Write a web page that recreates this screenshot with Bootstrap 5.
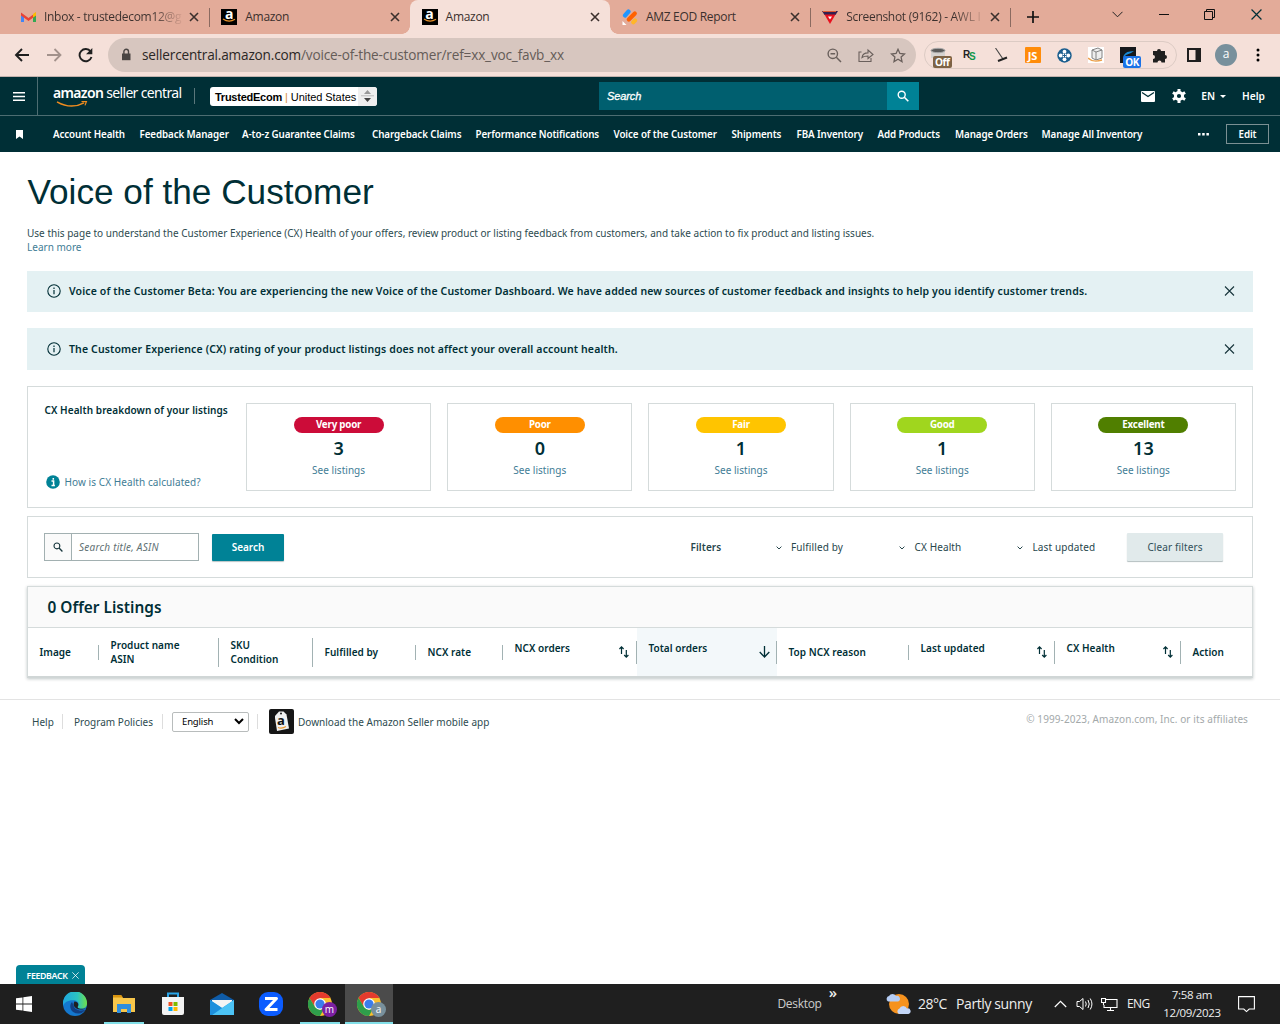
<!DOCTYPE html>
<html lang="en">
<head>
<meta charset="utf-8">
<meta name="viewport" content="width=device-width, initial-scale=1">
<title>Amazon</title>
<link href="https://cdn.jsdelivr.net/npm/bootstrap@5.3.0/dist/css/bootstrap.min.css" rel="stylesheet">
<style>
:root{--ink:#002f36;--teal:#008296;--line:#d5dbdb;--link:#3f7d96}
body{height:1024px;width:1280px;overflow:hidden;font-family:"Noto Sans","Open Sans",sans-serif;font-size:10px;line-height:14px;color:var(--ink);background:#fff;white-space:nowrap}
svg{display:block;flex:none}
a{text-decoration:none;color:var(--link)}
/* small left gaps between icons and labels */
.gl-4{margin-left:4px}.gl-5{margin-left:5px}.gl-7{margin-left:7px}.gl-8{margin-left:8px}.gl-9{margin-left:9px}.gl-10{margin-left:10px}.gl-11{margin-left:11px}.gl-13{margin-left:13px}.gl-14{margin-left:14px}.gl-15{margin-left:15px}.gl-16{margin-left:16px}.gl-17{margin-left:17px}.gl-19{margin-left:19px}.gl-30{margin-left:30px}
.gt-8{margin-top:8px}.gt-16{margin-top:16px}
.chrome-ui{font-family:"Open Sans","Noto Sans",sans-serif}
/* tab strip */
.tabstrip{height:34px;background:#e3ab99;padding-left:9.5px}
.tab-item{width:200.3px;height:34px;padding:0 10.500px 0 11.5px;position:relative;font-size:12px;letter-spacing:-.3px;color:#3b302d}
.tab-item .tab-title{flex:1;margin-left:8px}
.tab-item.fade-end .tab-title{background:linear-gradient(90deg,#3b302d 108px,#cf9a89 136px);-webkit-background-clip:text;background-clip:text;color:transparent}
.tab-item.split::after{content:"";position:absolute;right:0;top:8px;width:1px;height:19px;background:#8b6a60}
.tab-item.current{background:#f5e0d9;border-radius:8px 8px 0 0}
.tab-item.current::before,.tab-item.current::after{content:"";position:absolute;bottom:0;width:8px;height:8px}
.tab-item.current::before{left:-8px;background:radial-gradient(circle at 0 0,transparent 7.5px,#f5e0d9 8px)}
.tab-item.current::after{right:-8px;background:radial-gradient(circle at 100% 0,transparent 7.5px,#f5e0d9 8px)}
.a-fav{width:16px;height:16px;background:#000;flex:none;color:#fff;font-weight:700;font-size:14px;line-height:10px;letter-spacing:0;text-align:center}
.a-fav svg{margin:-1px 0 0 1px}
.win-btns{height:28px;width:150px;margin-right:18px}
/* toolbar */
.toolbar{height:43px;background:#f5e0d9;border-bottom:1px solid #c2b2ad;padding:0 14px}
.omnibox{width:808px;height:34px;border-radius:17px;background:#d7c6bf;padding:0 10px 0 12px;font-size:13.6px;letter-spacing:-.17px;color:#2b2725}
.omnibox .url-path{color:#655c58}
.page-acts{color:#6a605c}
.ext-pill{width:253px;height:28px;border:1px solid #dccbc4;border-radius:14px}
.ext-pill>*{width:32px;height:26px;display:flex;align-items:center;justify-content:center;position:relative}
.ext-pill>:first-child{width:28px}
.ext-pill>:last-child{width:32px}
.ext-tag{position:absolute;left:8px;top:14px;height:12px;border-radius:2px;font-size:10px;letter-spacing:-.4px;font-weight:700;line-height:12px;color:#fff;padding:0 2px}
.tag-off{background:#7d6245}.tag-ok{background:#1a73e8;left:11px}
.js-box{width:16px;height:16px;background:#ff8c0a;border-radius:1px;color:#fff;font:700 11px/17px "Noto Sans",sans-serif;text-align:center}
.rs-mark{font:700 10px/14px "Liberation Sans",sans-serif;letter-spacing:-1px;color:#222}
.rs-mark span{color:#11984b;position:relative;top:2px}
.avatar{width:22px;height:22px;border-radius:50%;background:#78909c;color:#fff;font-size:12px;line-height:20px;text-align:center}
/* seller central header */
.sc-top{height:39px;background:var(--ink);border-bottom:1px solid #4d6d72;color:#fff}
.sc-burger{width:38px;height:38px;border-right:1px solid #4d6d72}
.sc-logo{width:128px;margin-left:15px;font-size:14px;line-height:18px;letter-spacing:-.66px;height:24px;position:relative}
.sc-logo b{font-weight:600;letter-spacing:-.66px}
.sc-logo svg{position:absolute;left:3px;top:17px}
.sc-rule{width:1px;height:16px;background:#5a777b;margin:0 15px 0 13px}
.acct{width:167px;height:19px;background:#fff;border-radius:3px;color:#000;font:11px/20px "Liberation Sans",sans-serif;padding-left:5px;letter-spacing:-.05px}
.acct b{font-weight:700;letter-spacing:-.25px}
.acct i{font-style:normal;color:#d98a3d}
.acct-step{width:19px;height:19px;background:#efefef;border-radius:0 3px 3px 0}
.sc-search{width:320px;height:28px;margin-left:222px;background:#005f6f}
.sc-search em{font:italic 11px/28px "Liberation Sans",sans-serif;letter-spacing:-.1px;padding-left:8px;-webkit-text-stroke:.3px #fff}
.sc-search .go{width:32px;height:28px;background:var(--teal)}
.sc-right{margin-left:auto;padding-right:15px;font-weight:600;font-size:10.2px}
.sc-nav{height:36px;background:var(--ink);color:#fff;font-weight:600;font-size:9.8px;letter-spacing:-.1px}
.sc-links{display:grid;grid-template-columns:86.5px 102.5px 130px 103.5px 138px 118px 65px 81px 77.5px 86.5px 102px;padding-top:2px}
.btn-edit{width:43px;height:20px;border:1px solid #7b9093;line-height:19px;text-align:center;margin:0 11px 0 17px}
/* content */
.page-main{padding:0 27px}
h1{font:35.2px/42px "Liberation Sans",sans-serif;margin:19px 0 0 .5px;color:var(--ink)}
.intro{margin-top:13px;color:#2d4b50;height:28px;letter-spacing:.012px}
.notice{height:41px;background:#e4f1f3;padding:0 18px 1px 20px;margin-top:16px;font-weight:600;font-size:10.5px;letter-spacing:.138px}
.notice.n-first{margin-top:17px}
.notice.n-tall{height:42px}
.notice svg:last-child{color:#17363c}
.panel{border:1px solid var(--line)}
.panel-cx{height:122px;margin-top:16px}
.panel-find{height:62px;padding:0 29px 0 16px}
.hb{font-weight:600;letter-spacing:.08px}
.cx-side{width:202px;padding-left:.5px}
.cx-side a{letter-spacing:.08px;margin-bottom:2px}
.cx-card{flex:1;height:88px;border:1px solid var(--line);padding-top:13px;text-align:center}
.cx-pill{width:90px;height:16px;border-radius:8px;color:#fff;font-weight:700;font-size:9.8px;line-height:15px;margin:0 auto;letter-spacing:-.22px}
.p-vpoor{background:#cc0c39}.p-poor{background:#ff8f00}.p-fair{background:#ffc400}.p-good{background:#a0d61e}.p-exc{background:#507f00}
.cx-num{font-weight:600;font-size:18px;line-height:31px}
.cx-card a{display:block;line-height:12px;letter-spacing:.04px}
.find-box{width:155px;height:28px;border:1px solid #a2b0b1;font-style:italic;color:#5f7173;letter-spacing:.25px}
.find-box .ico{width:27px;background:#fafafa;border-right:1px solid #a2b0b1;color:#17363c}
.find-box span{padding:6px 0 0 7px}
.b-primary{width:72px;height:27px;background:var(--teal);color:#fff;font-weight:600;line-height:27px;text-align:center;border-radius:1px;box-shadow:0 1px 1px #b9c4c5}
.b-clear{width:96px;height:28px;background:#e1eaeb;color:#31505a;line-height:28px;text-align:center;border-radius:1px;box-shadow:0 1px 1px #b4bfc0;letter-spacing:.12px}
.filter-row{display:grid;grid-template-columns:85px 123.5px 118px 110px 96px;color:#27464c;letter-spacing:.12px}
.filter-row svg{display:inline-block;vertical-align:middle;margin-right:9.5px}
.listing{border:1px solid var(--line);border-bottom:2px solid #d0d6d6;box-shadow:0 1px 3px rgba(0,30,30,.25);height:92px}
.listing-head{height:41px;background:#fafafa;border-bottom:1px solid var(--line);font-weight:600;font-size:15.4px;line-height:41px;padding-left:19.5px}
.cols{display:grid;grid-template-columns:71px 120px 94px 103px 87px 134px 140px 132px 146px 126px 71px;height:48px;font-weight:600;letter-spacing:.05px}
.cols>div{display:flex;align-items:center;padding-left:11.5px;position:relative}
.cols>div:not(:last-child)::after{content:"";position:absolute;right:0;top:17px;height:15px;width:1px;background:#a2b2b3}
.cols>.two::after{top:10px!important;height:29px!important}
.cols>.sort::after{top:13px!important;height:23px!important}
.cols>.sort{justify-content:space-between;padding-right:8px}
.cols>.sort.sorted{padding-right:7px;background:#f3f8fa}
.cols>.sort svg{margin-top:-1px}
.cols>.sort span{margin-top:-8px}
footer{height:45px;border-top:1px solid #e3e3e3;margin-top:21px;padding:0 32px 1px;color:#2d4b50;letter-spacing:.02px}
.f-rule{width:1px;height:15px;background:#ddd}
.f-help{width:30px}
.f-pol{width:88px}
.f-copy{color:#a3a9aa;margin-top:-6px;letter-spacing:.09px}
.lang{width:77px;height:20px;border:1px solid #b8bcbc;border-radius:2px;color:#000;padding:0 4px 0 9px;margin:0 8px 0 9px;font-size:9.5px;letter-spacing:-.15px}
.app-ico{width:25px;height:25px;border-radius:2px;background:#161616;position:relative}
.app-ico svg{position:absolute;left:0;top:0}
.app-ico span{position:absolute;left:8px;top:4px;font:700 13px/15px "Open Sans",sans-serif;color:#111}
.feedback{width:69px;height:19px;background:var(--teal);border-radius:4px 4px 0 0;color:#fff;font-weight:600;font-size:8.8px;letter-spacing:-.35px;margin:auto 0 0 16px;padding:2px 6px 0 10.5px}
/* taskbar */
.taskbar{height:40px;background:#1f1f1f;color:#eee;font-size:12px;line-height:18px}
.tk{width:48px;height:40px;position:relative;margin-left:1px}
.tk.start{width:50px;margin:0;padding-right:2px}
.tk.run::after{content:"";position:absolute;left:4px;right:4px;bottom:0;height:2px;background:#82dfe8}
.tk.front{background:#4b4b4b}
.tk.front::after{left:0;right:0}
.prof{position:absolute;left:26px;top:18px;width:15px;height:15px;border-radius:50%;color:#fff;font-size:10px;line-height:14px;text-align:center}
.prof.pm{background:#7b1fa2}.prof.pa{background:#78909c}
.tb-desk{color:#ccc;letter-spacing:-.3px}
.tb-more{margin:-3px 0 0 7px;font-size:15px;font-weight:600}
.wx{margin-left:49px}
.wx-t{font-size:14px;width:38px;letter-spacing:-.5px}
.wx-s{font-size:14px;width:98px;letter-spacing:-.4px}
.tb-lang{width:36px;letter-spacing:-.6px}
.tb-clock{width:58px;font-size:11.5px;letter-spacing:-.35px}
.tb-note{margin:1px 25px 0 17px}
</style>
</head>
<body class="d-flex flex-column">
<svg width="0" height="0" class="position-absolute">
 <symbol id="x" viewBox="0 0 10 10"><path d="M1 1l8 8M9 1L1 9" fill="none" stroke="currentColor" stroke-width="1.6"/></symbol>
 <symbol id="x1" viewBox="0 0 10 10"><path d="M.5.5l9 9M9.500.5l-9 9" fill="none" stroke="currentColor" stroke-width="1.1"/></symbol>
 <symbol id="mag" viewBox="0 0 12 12"><circle cx="4.700" cy="4.700" r="3.500" fill="none" stroke="currentColor" stroke-width="1.400"/><path d="M7.300 7.300l4 4" stroke="currentColor" stroke-width="1.600"/></symbol>
 <symbol id="smile" viewBox="0 0 14 5"><path d="M1 1q6 4 12 .2" fill="none" stroke="#e8912a" stroke-width="1.300"/></symbol>
 <symbol id="info" viewBox="0 0 14 14"><circle cx="7" cy="7" r="6.200" fill="none" stroke="currentColor" stroke-width="1.100"/><path d="M7 6v4.200M7 3.600v1.300" stroke="currentColor" stroke-width="1.200"/></symbol>
 <symbol id="updn" viewBox="0 0 10 14"><path d="M2.500 9V2M.4 4l2.100-2.200L4.600 4M7.300 5v7M5.200 10l2.100 2.200L9.400 10" fill="none" stroke="currentColor" stroke-width="1.200"/></symbol>
 <symbol id="chev" viewBox="0 0 6 4"><path d="M.6.6L3 3 5.400.6" fill="none" stroke="currentColor"/></symbol>
 <symbol id="chr" viewBox="0 0 24 24"><circle cx="12" cy="12" r="12" fill="#fbc02d"/><path d="M1.600 6A12 12 0 0 1 22.400 6H12L7 15z" fill="#e33b2e"/><path d="M1.600 6A12 12 0 0 0 12 24l5-9-5 3-5-3z" fill="#2e9e4b"/><circle cx="12" cy="12" r="5.800" fill="#fff"/><circle cx="12" cy="12" r="4.600" fill="#3b7ded"/></symbol>
</svg>

<div class="chrome-ui">
 <div class="tabstrip d-flex">
  <div class="tab-item d-flex align-items-center split fade-end"><svg width="15" height="12" viewBox="0 0 15 12"><path d="M0 2v9h3V5z" fill="#4285f4"/><path d="M15 2v9h-3V5z" fill="#34a853"/><path d="M0 1.500l7.500 5.500L15 1.500V4.500l-7.500 5.500L0 4.500z" fill="#ea4335"/><path d="M12 3l3-2v3.500l-3 2z" fill="#fbbc04"/></svg><span class="tab-title">Inbox - trustedecom12@g</span><svg width="10" height="10"><use href="#x"/></svg></div>
  <div class="tab-item d-flex align-items-center"><div class="a-fav">a<svg width="14" height="5"><use href="#smile"/></svg></div><span class="tab-title">Amazon</span><svg width="10" height="10"><use href="#x"/></svg></div>
  <div class="tab-item current d-flex align-items-center"><div class="a-fav">a<svg width="14" height="5"><use href="#smile"/></svg></div><span class="tab-title">Amazon</span><svg width="10" height="10"><use href="#x"/></svg></div>
  <div class="tab-item d-flex align-items-center split"><svg width="16" height="16" viewBox="0 0 16 16"><g stroke-width="4.200" stroke-linecap="round"><path d="M3 6.500l3.500-4" stroke="#2196ff"/><path d="M6.800 10.500l6-6" stroke="#ff6100"/><path d="M11.300 13.300l1.700-1.700" stroke="#ffb629"/></g><path d="M.5 12v4h4z" fill="#fff"/></svg><span class="tab-title">AMZ EOD Report</span><svg width="10" height="10"><use href="#x"/></svg></div>
  <div class="tab-item d-flex align-items-center split fade-end"><svg width="16" height="14" viewBox="0 0 16 14"><path d="M0 1h16l-2.500 4h-11z" fill="#342050"/><path d="M2.500 4.500h11L8 14z" fill="#e8101e"/><path d="M6 6.500h4L8 9.500z" fill="#fff"/><path d="M1 1.500h13" stroke="#e05a35"/></svg><span class="tab-title">Screenshot (9162) - AWL I</span><svg width="10" height="10"><use href="#x"/></svg></div>
  <svg class="gl-16 align-self-center" width="12" height="12" viewBox="0 0 12 12"><path d="M6 0v12M0 6h12" stroke="#111" stroke-width="1.700"/></svg>
  <div class="win-btns ms-auto d-flex justify-content-between align-items-center">
   <svg width="11" height="7" viewBox="0 0 11 7"><path d="M.5.8l5 5 5-5" fill="none" stroke="#222"/></svg>
   <svg width="10" height="2"><path d="M0 1.500h10" stroke="#111"/></svg>
   <svg width="11" height="11" viewBox="0 0 11 11"><path d="M.5 2.500h8v8h-8zM2.500 2.500v-2h8v8h-2" fill="none" stroke="#111"/></svg>
   <svg width="11" height="11"><use href="#x1"/></svg>
  </div>
 </div>
 <div class="toolbar d-flex align-items-center">
  <svg width="16" height="14" viewBox="0 0 16 14"><path d="M15 7H2M8 1L2 7l6 6" fill="none" stroke="#1f1f1f" stroke-width="1.900"/></svg>
  <svg class="gl-17" width="16" height="14" viewBox="0 0 16 14"><path d="M0 7h13M7.500 1l6 6-6 6" fill="none" stroke="#a3928c" stroke-width="1.800"/></svg>
  <svg class="gl-15" width="15" height="15" viewBox="0 0 15 15"><path d="M12.600 3.500A6.100 6.100 0 1 0 13.500 9" fill="none" stroke="#1f1f1f" stroke-width="1.900"/><path d="M14.300 0v6.300H8z" fill="#1f1f1f"/></svg>
  <div class="omnibox gl-15 d-flex align-items-center">
   <svg width="12" height="14" viewBox="0 0 12 14"><path d="M2 5.500h8.500v6.700H2z" fill="#4a4543"/><path d="M3.900 6V3.500a2.300 2.300 0 0 1 4.600 0V6" fill="none" stroke="#4a4543" stroke-width="1.400"/></svg>
   <span class="gl-10">sellercentral.amazon.com<span class="url-path">/voice-of-the-customer/ref=xx_voc_favb_xx</span></span>
   <div class="page-acts ms-auto d-flex align-items-center gap-3">
    <svg width="15" height="15" viewBox="0 0 15 15"><circle cx="5.800" cy="5.800" r="4.700" fill="none" stroke="currentColor" stroke-width="1.400"/><path d="M9.300 9.300l4.700 4.700M3.500 5.800h4.600" stroke="currentColor" stroke-width="1.500"/></svg>
    <svg width="16" height="15" viewBox="0 0 16 15"><path d="M3.500 4H1v9.500h12V10M4 9.500c.5-3 2.500-4.600 6-4.600V2l5 4.500-5 4V8c-2.500 0-4.500.3-6 1.500z" fill="none" stroke="currentColor" stroke-width="1.100"/></svg>
    <svg width="16" height="15" viewBox="0 0 16 15"><path d="M8 1.300l1.900 4.200 4.600.5-3.400 3.100.9 4.500L8 11.300l-4 2.300.9-4.500L1.500 6l4.600-.5z" fill="none" stroke="currentColor" stroke-width="1.300"/></svg>
   </div>
  </div>
  <div class="ext-pill gl-8 d-flex">
   <div><svg width="17" height="16" viewBox="0 0 17 16"><path d="M1 3v8h14V3z" fill="#d5d2d0"/><ellipse cx="8" cy="3.500" rx="7" ry="2.200" fill="#5a5a5a" stroke="#aaa"/></svg><span class="ext-tag tag-off">Off</span></div>
   <div class="rs-mark">R<span>S</span></div>
   <div><svg width="14" height="14" viewBox="0 0 14 14"><path d="M1.500 0L9 11" stroke="#444" stroke-width="1.100"/><path d="M4 13l9-3.500" stroke="#222" stroke-width="1.900"/></svg></div>
   <div><div class="js-box">JS</div></div>
   <div><svg width="15" height="15" viewBox="0 0 15 15"><circle cx="7.500" cy="7.500" r="7.200" fill="#1c5f8f"/><g fill="#fff"><circle cx="7.500" cy="3.700" r="1.900"/><circle cx="7.500" cy="11.300" r="1.900"/><circle cx="3.700" cy="7.500" r="1.900"/><circle cx="11.300" cy="7.500" r="1.900"/><path d="M5.700 5.700h3.600v3.600H5.700z"/></g><path d="M7.500 5.500v4M5.500 7.500h4" stroke="#1c5f8f" stroke-width="1"/></svg></div>
   <div><svg width="16" height="16" viewBox="0 0 16 16"><path d="M0 0h16v16H0z" fill="#fff"/><path d="M4 3l6-2 4 2v8l-6 2-4-2zM4 3l4 2v8M8 5l6-2" fill="#eee" stroke="#777" stroke-width=".9"/><path d="M0 11q5 5 14 2" fill="none" stroke="#eda04a" stroke-width="1.400"/></svg></div>
   <div><svg width="16" height="16" viewBox="0 0 16 16"><path d="M0 0h16v16H0z" fill="#15181c"/><path d="M3 11q1-6 7-6.500l4-.5-3 2-5 2z" fill="#1689d6"/></svg><span class="ext-tag tag-ok">OK</span></div>
   <div><svg width="16" height="16" viewBox="0 0 16 16"><path d="M1 4h4a2 2 0 1 1 4 0h4v4a2 2 0 1 1 0 4v3.500H9.500a2 2 0 1 0-4 0H1V12a2 2 0 1 0 0-4z" fill="#1f1f1f"/></svg></div>
  </div>
  <svg class="gl-10" width="14" height="14" viewBox="0 0 14 14"><path d="M1 1h12v12H1z" fill="none" stroke="#1f1f1f" stroke-width="2"/><path d="M8.500 1H13v12H8.500z" fill="#1f1f1f"/></svg>
  <div class="avatar gl-14">a</div>
  <svg class="gl-19" width="4" height="14" viewBox="0 0 4 14"><circle cx="2" cy="2" r="1.500"/><circle cx="2" cy="7" r="1.500"/><circle cx="2" cy="12" r="1.500"/></svg>
 </div>
</div>

<header>
 <div class="sc-top d-flex align-items-center">
  <div class="sc-burger d-flex align-items-center justify-content-center"><svg width="12" height="9" viewBox="0 0 12 9"><path d="M0 .8h12M0 4.500h12M0 8.200h12" stroke="#fff" stroke-width="1.400"/></svg></div>
  <div class="sc-logo"><b>amazon</b> seller central<svg width="32" height="7" viewBox="0 0 32 7"><path d="M1 .8q14 8 27 1" fill="none" stroke="#f08c1f" stroke-width="1.500"/><path d="M25.500 .6l5-.2-1.500 4" fill="none" stroke="#f08c1f" stroke-width="1.200"/></svg></div>
  <div class="sc-rule"></div>
  <div class="acct d-flex"><span class="flex-grow-1"><b>TrustedEcom</b> <i>|</i> United States</span><div class="acct-step d-flex align-items-center justify-content-center"><svg width="13" height="12" viewBox="0 0 13 12"><path d="M3 4l3.500-4L10 4z" fill="#999"/><path d="M0 5.800h13" stroke="#bbb"/><path d="M3 8l3.500 4L10 8z" fill="#444"/></svg></div></div>
  <div class="sc-search d-flex"><em class="flex-grow-1">Search</em><div class="go d-flex align-items-center justify-content-center"><svg width="12" height="12"><use href="#mag"/></svg></div></div>
  <div class="sc-right d-flex align-items-center">
   <svg width="14" height="11" viewBox="0 0 14 11"><rect width="14" height="11" rx="1" fill="#fff"/><path d="M1 1.500l6 4 6-4" fill="none" stroke="#002f36" stroke-width="1.300"/></svg>
   <svg class="gl-17" width="14" height="14" viewBox="0 0 14 14"><circle cx="7" cy="7" r="3.600" fill="none" stroke="#fff" stroke-width="3"/><g stroke="#fff" stroke-width="3"><path d="M7 0v3M7 11v3M.9 3.500l2.600 1.500M10.500 9l2.600 1.500M.9 10.500L3.500 9M10.500 5l2.600-1.500"/></g></svg>
   <span class="gl-15">EN</span><svg class="gl-5" width="6" height="3"><path d="M0 0h6L3 3z" fill="#fff"/></svg>
   <span class="gl-16">Help</span>
  </div>
 </div>
 <nav class="sc-nav d-flex align-items-center">
  <svg class="gl-16" width="7" height="9"><path d="M0 0h7v9L3.500 6.500 0 9z" fill="#fff"/></svg>
  <div class="sc-links gl-30"><span>Account Health</span><span>Feedback Manager</span><span>A-to-z Guarantee Claims</span><span>Chargeback Claims</span><span>Performance Notifications</span><span>Voice of the Customer</span><span>Shipments</span><span>FBA Inventory</span><span>Add Products</span><span>Manage Orders</span><span>Manage All Inventory</span></div>
  <svg class="ms-auto" width="11" height="3"><path d="M0 0h2.500v2.500H0zM4.200 0h2.500v2.500H4.200zM8.400 0h2.500v2.500H8.400z" fill="#fff"/></svg>
  <div class="btn-edit">Edit</div>
 </nav>
</header>

<main class="page-main">
 <h1>Voice of the Customer</h1>
 <div class="intro">Use this page to understand the Customer Experience (CX) Health of your offers, review product or listing feedback from customers, and take action to fix product and listing issues.<br><a href="#">Learn more</a></div>
 <div class="notice n-first d-flex align-items-center"><svg width="14" height="14"><use href="#info"/></svg><span class="gl-8">Voice of the Customer Beta: You are experiencing the new Voice of the Customer Dashboard. We have added new sources of customer feedback and insights to help you identify customer trends.</span><svg class="ms-auto" width="11" height="10"><use href="#x1"/></svg></div>
 <div class="notice n-tall d-flex align-items-center"><svg width="14" height="14"><use href="#info"/></svg><span class="gl-8">The Customer Experience (CX) rating of your product listings does not affect your overall account health.</span><svg class="ms-auto" width="11" height="10"><use href="#x1"/></svg></div>

 <section class="panel panel-cx d-flex p-3">
  <div class="cx-side d-flex flex-column justify-content-between"><span class="hb">CX Health breakdown of your listings</span><a href="#" class="d-flex align-items-center"><svg class="ms-0" width="15" height="14" viewBox="-1 0 15 14"><circle cx="7" cy="7" r="6.800" fill="#008296"/><path d="M5.500 6H7.600v4.300M5.500 10.500h3.400M7.300 3v1.700" fill="none" stroke="#fff" stroke-width="1.500"/></svg><span class="gl-5">How is CX Health calculated?</span></a></div>
  <div class="d-flex flex-grow-1 gap-3">
   <div class="cx-card"><div class="cx-pill p-vpoor">Very poor</div><div class="cx-num">3</div><a href="#">See listings</a></div>
   <div class="cx-card"><div class="cx-pill p-poor">Poor</div><div class="cx-num">0</div><a href="#">See listings</a></div>
   <div class="cx-card"><div class="cx-pill p-fair">Fair</div><div class="cx-num">1</div><a href="#">See listings</a></div>
   <div class="cx-card"><div class="cx-pill p-good">Good</div><div class="cx-num">1</div><a href="#">See listings</a></div>
   <div class="cx-card"><div class="cx-pill p-exc">Excellent</div><div class="cx-num">13</div><a href="#">See listings</a></div>
  </div>
 </section>

 <section class="panel panel-find gt-8 d-flex align-items-center">
  <div class="find-box d-flex"><div class="ico d-flex align-items-center justify-content-center"><svg width="10" height="10" viewBox="0 0 12 12"><circle cx="4.700" cy="4.700" r="3.500" fill="none" stroke="currentColor" stroke-width="1.300"/><path d="M7.300 7.300l4 4" stroke="currentColor" stroke-width="1.600"/></svg></div><span>Search title, ASIN</span></div>
  <div class="b-primary gl-13">Search</div>
  <div class="filter-row ms-auto align-items-center"><span class="hb">Filters</span><span><svg width="6" height="4"><use href="#chev"/></svg>Fulfilled by</span><span><svg width="6" height="4"><use href="#chev"/></svg>CX Health</span><span><svg width="6" height="4"><use href="#chev"/></svg>Last updated</span><div class="b-clear">Clear filters</div></div>
 </section>

 <section class="listing gt-8">
  <div class="listing-head">0 Offer Listings</div>
  <div class="cols">
   <div>Image</div><div class="two">Product name<br>ASIN</div><div class="two">SKU<br>Condition</div><div>Fulfilled by</div><div>NCX rate</div>
   <div class="sort"><span>NCX orders</span><svg width="10" height="14"><use href="#updn"/></svg></div>
   <div class="sort sorted"><span>Total orders</span><svg width="11" height="12" viewBox="0 0 11 12"><path d="M5.500 0v11M.7 6l4.800 5 4.800-5" fill="none" stroke="currentColor" stroke-width="1.300"/></svg></div>
   <div>Top NCX reason</div>
   <div class="sort"><span>Last updated</span><svg width="10" height="14"><use href="#updn"/></svg></div>
   <div class="sort"><span>CX Health</span><svg width="10" height="14"><use href="#updn"/></svg></div>
   <div>Action</div>
  </div>
 </section>
</main>

<footer class="d-flex align-items-center">
 <span class="f-help">Help</span><i class="f-rule"></i>
 <span class="f-pol gl-11">Program Policies</span><i class="f-rule"></i>
 <div class="lang d-flex align-items-center justify-content-between">English<svg width="10" height="7" viewBox="0 0 10 7"><path d="M1 1l4 4 4-4" fill="none" stroke="#000" stroke-width="2"/></svg></div><i class="f-rule"></i>
 <div class="app-ico gl-11"><svg width="25" height="25" viewBox="0 0 25 25"><path d="M6 7l4-4.500h4.500l3 3 2.500 14-12 2.500-2-13z" fill="#f1f1f1"/><path d="M9 18.500q4 1.500 8-1" fill="none" stroke="#f29a2e" stroke-width="1.200"/><circle cx="12" cy="4.500" r="1" fill="#161616"/></svg><span>a</span></div>
 <span class="gl-4">Download the Amazon Seller mobile app</span>
 <span class="f-copy ms-auto">© 1999-2023, Amazon.com, Inc. or its affiliates</span>
</footer>

<div class="feedback d-flex align-items-center justify-content-between">FEEDBACK<svg width="7" height="7"><use href="#x1"/></svg></div>
<div class="taskbar chrome-ui d-flex align-items-center">
 <div class="tk start d-flex align-items-center justify-content-center"><svg width="16" height="16" viewBox="0 0 16 16"><path d="M0 2.300l6.500-.9v6.200H0zM7.300 1.200L16 0v7.600H7.300zM0 8.400h6.500v6.200L0 13.700zM7.300 8.400H16V16l-8.700-1.200z" fill="#fff"/></svg></div>
 <div class="tk d-flex align-items-center justify-content-center"><svg width="24" height="24" viewBox="0 0 24 24"><defs><linearGradient id="eg"><stop offset="0" stop-color="#1ea7e0"/><stop offset=".6" stop-color="#2cc3c0"/><stop offset="1" stop-color="#6fe04a"/></linearGradient></defs><circle cx="12" cy="12" r="12" fill="#1478cf"/><path d="M23 16.500Q24 19 22 22l3 2V15z" fill="#1f1f1f"/><path d="M0 11A12 12 0 0 1 24 11.500c0 4-3.500 5.500-6.500 5.200-2.500-.2-3.400-1.200-2.600-2.200 1.800-2.800 0-5.700-3.400-6.200C6 7.600 1 10 0 14z" fill="url(#eg)"/><path d="M9 10c-4 4-1 12 7 11.500 3 0 5-2 6.500-4C17 20 11 17.500 10.500 13z" fill="#123f83"/><path d="M11.500 9.500c-2 3-.5 7.500 6 8 2 .1 4-.4 5.500-1.500-3 1.500-8 .8-8.400-.8-.1-.6 1-1.500.6-3.200-.3-1.500-2-2.600-3.700-2.500z" fill="#1f1f1f"/></svg></div>
 <div class="tk run d-flex align-items-center justify-content-center"><svg width="22" height="20" viewBox="0 0 22 20"><path d="M0 1h8l2 3h12v14H0z" fill="#f7c64b"/><path d="M0 1h8l2 2.500H0z" fill="#d9940f"/><path d="M4 10h14v9h-4v-4H8v4H4z" fill="#2f8ede"/></svg></div>
 <div class="tk d-flex align-items-center justify-content-center"><svg width="24" height="24" viewBox="0 0 24 24"><path d="M7 5V1.500h10V5" fill="none" stroke="#2aa5e8" stroke-width="2"/><path d="M1 5h22v16a2 2 0 0 1-2 2H3a2 2 0 0 1-2-2z" fill="#f3f3f3"/><path d="M7.500 10h4v4h-4z" fill="#f25022"/><path d="M12.500 10h4v4h-4z" fill="#7fba00"/><path d="M7.500 15h4v4h-4z" fill="#00a4ef"/><path d="M12.500 15h4v4h-4z" fill="#ffb900"/></svg></div>
 <div class="tk d-flex align-items-center justify-content-center"><svg width="24" height="22" viewBox="0 0 24 22"><path d="M0 7l12-7 12 7v4H0z" fill="#0f5ca8"/><path d="M2 7h20v6l-10 4L2 13z" fill="#f4f4f4"/><path d="M0 7l12 8L24 7v15H0z" fill="#28a8ea"/><path d="M24 7v15H2z" fill="#4cc3f5"/><path d="M0 7l12 8-10 7H0z" fill="#1e8fdc"/></svg></div>
 <div class="tk d-flex align-items-center justify-content-center"><svg width="24" height="24" viewBox="0 0 24 24"><rect width="24" height="24" rx="9" fill="#0b5cff"/><path d="M6 6.500h11.500L7 17.500h11.500" fill="none" stroke="#fff" stroke-width="3" stroke-linejoin="round"/></svg></div>
 <div class="tk run d-flex align-items-center justify-content-center"><svg width="24" height="24"><use href="#chr"/></svg><span class="prof pm">m</span></div>
 <div class="tk run front d-flex align-items-center justify-content-center"><svg width="24" height="24"><use href="#chr"/></svg><span class="prof pa">a</span></div>
 <div class="ms-auto d-flex align-items-center">
  <span class="tb-desk">Desktop</span><span class="tb-more align-self-start">»</span>
  <svg class="wx" width="25" height="24" viewBox="0 0 25 24"><circle cx="13" cy="12" r="10" fill="#f6921e"/><path d="M2 9.500a3 3 0 0 1 1-5.500 4 4 0 0 1 7 0 2.800 2.800 0 0 1 2 5.500z" fill="#b5cdf5"/><path d="M13 22a3 3 0 0 1 .5-5.500 4 4 0 0 1 7.500 0 2.800 2.800 0 0 1 1.500 5.500z" fill="#c3d6f8"/></svg>
  <span class="wx-t gl-7">28°C</span><span class="wx-s">Partly sunny</span>
  <svg width="13" height="8" viewBox="0 0 13 8"><path d="M.8 7l5.700-5.700L12.200 7" fill="none" stroke="#fff" stroke-width="1.200"/></svg>
  <svg class="gl-9" width="17" height="14" viewBox="0 0 17 14"><path d="M1 4.500h2.500L7 1.500v11L3.500 9.500H1zM9.500 4.500q1.500 2.500 0 5M12 3q2.500 4 0 8M14.200 1.500q3.500 5.500 0 11" fill="none" stroke="#fff"/></svg>
  <svg class="gl-8" width="17" height="15" viewBox="0 0 17 15"><path d="M5 2.500h11v8H3V8M.5 1.500h4v4h-4zM2.500 5.500V8M9.500 10.500v3M6 13.500h7" fill="none" stroke="#fff" stroke-width="1.100"/></svg>
  <span class="tb-lang gl-9">ENG</span>
  <span class="tb-clock text-center">7:58 am<br>12/09/2023</span>
  <svg class="tb-note" width="17" height="17" viewBox="0 0 17 17"><path d="M.6.6h15.800v12.400h-5.200L8.500 15.600 5.800 13H.6z" fill="none" stroke="#fff" stroke-width="1.100"/></svg>
 </div>
</div>
<script src="https://cdn.jsdelivr.net/npm/bootstrap@5.3.0/dist/js/bootstrap.bundle.min.js"></script>
</body>
</html>
